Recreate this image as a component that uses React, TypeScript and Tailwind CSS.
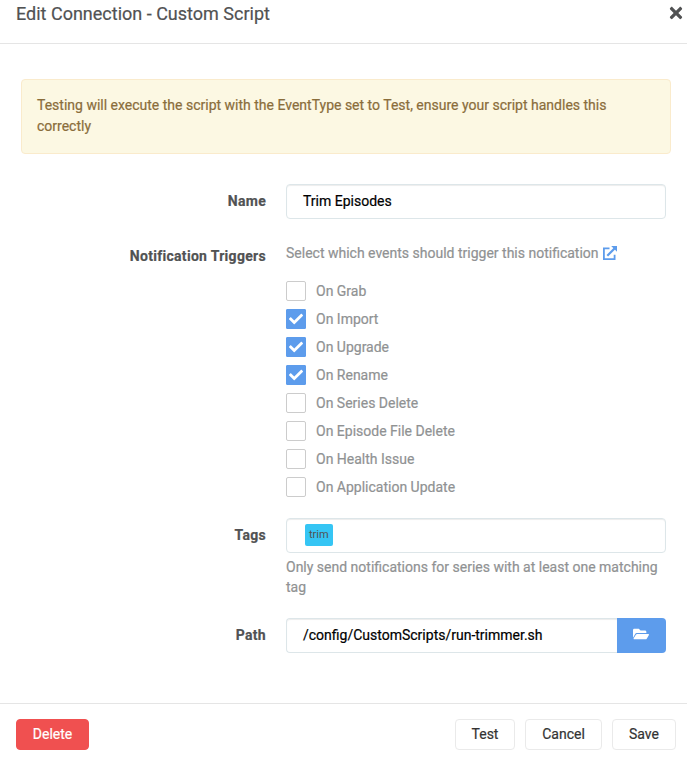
import { FaTimes, FaCheck, FaFolderOpen } from 'react-icons/fa';
import type { ReactNode } from 'react';

const triggers = [
  { label: 'On Grab', on: false },
  { label: 'On Import', on: true },
  { label: 'On Upgrade', on: true },
  { label: 'On Rename', on: true },
  { label: 'On Series Delete', on: false },
  { label: 'On Episode File Delete', on: false },
  { label: 'On Health Issue', on: false },
  { label: 'On Application Update', on: false },
];

const inputBox =
  'h-[35px] border border-[#dde6e9] bg-white px-4 shadow-[inset_0_1px_1px_rgba(0,0,0,0.075)]';

function ExternalLink() {
  return (
    <svg width="14" height="14" viewBox="0 0 14 14" fill="none" stroke="#5d9cec">
      <path d="M6.5 2.4H0.9V13.1H11.6V8.8" strokeWidth="1.8" />
      <path d="M4.3 9.7L11.8 2.2" strokeWidth="2.2" />
      <path d="M8.2 0H14V5.8Z" fill="#5d9cec" stroke="none" />
    </svg>
  );
}

function Row({ label, className, children }: { label: string; className: string; children: ReactNode }) {
  return (
    <div className={`flex ${className}`}>
      <div className="mr-5 w-[245px] shrink-0 text-right font-bold leading-[35px] tracking-[0.3px]">{label}</div>
      <div className="w-[380px]">{children}</div>
    </div>
  );
}

function Button({ children, className }: { children: string; className: string }) {
  return (
    <button className={`h-[31px] rounded border text-center leading-[29px] ${className}`}>{children}</button>
  );
}

export default function App() {
  return (
    <div className="flex h-[760px] w-[687px] flex-col overflow-hidden bg-white font-['Roboto',sans-serif] text-[14px] leading-5 text-[#515253] [-webkit-text-stroke:0.2px]">
      <header className="flex h-11 items-start justify-between border-b border-[#e5e5e5] pl-4 pr-[2px]">
        <h1 className="text-[18px] leading-[28px]">Edit Connection - Custom Script</h1>
        <FaTimes size={18} className="mt-1" />
      </header>
      <main className="flex-1 px-[21px] pt-[35px]">
        <div className="h-[75px] w-[650px] rounded border border-[#faebcc] bg-[#fcf8e3] p-[15px] leading-[21px] text-[#8a6d3b]">
          Testing will execute the script with the EventType set to Test, ensure your script handles this correctly
        </div>
        <Row label="Name" className="mt-[30px] h-[55px]">
          <div className={`rounded leading-[33px] text-black ${inputBox}`}>Trim Episodes</div>
        </Row>
        <Row label="Notification Triggers" className="h-[279px]">
          <div className="flex h-[38px] items-center gap-1 pb-[10px] text-[#909293]">
            Select which events should trigger this notification
            <ExternalLink />
          </div>
          <div className="flex flex-col gap-2 pt-[4px]">
            {triggers.map((t) => (
              <div key={t.label} className="flex h-5 items-center gap-[10px] text-[#909293]">
                <span
                  className={`flex size-5 items-center justify-center border text-white ${
                    t.on ? 'rounded-[1px] border-[#5d9cec] bg-[#5d9cec]' : 'rounded-[2px] border-[#ccc] bg-white'
                  }`}
                >
                  {t.on && <FaCheck size={14} />}
                </span>
                {t.label}
              </div>
            ))}
          </div>
        </Row>
        <Row label="Tags" className="h-[100px]">
          <div className={`flex items-start rounded pl-[18px] pt-[5px] ${inputBox}`}>
            <span className="h-[22px] rounded-[2px] bg-[#35c5f4] px-1 text-[11px] leading-[21px] [-webkit-text-stroke:0px]">
              trim
            </span>
          </div>
          <div className="pt-1 text-[#909293]">
            Only send notifications for series with at least one matching tag
          </div>
        </Row>
        <Row label="Path" className="h-[35px]">
          <div className="flex">
            <div className={`w-[331px] rounded-l border-r-0 leading-[33px] text-black ${inputBox}`}>
              /config/CustomScripts/run-trimmer.sh
            </div>
            <div className="flex h-[35px] w-[49px] items-center justify-center rounded-r bg-[#5d9cec] pb-[3px] pr-px text-white">
              <FaFolderOpen size={16} />
            </div>
          </div>
        </Row>
      </main>
      <footer className="flex h-[57px] items-start gap-[10px] border-t border-[#e5e5e5] px-4 pt-[15px]">
        <Button className="mr-auto w-[73px] border-[#f05050] bg-[#f05050] text-white">Delete</Button>
        <Button className="w-[60px] border-[#eaeaea] text-[#333]">Test</Button>
        <Button className="w-[77px] border-[#eaeaea] text-[#333]">Cancel</Button>
        <Button className="-mr-[5px] w-16 border-[#eaeaea] text-[#333]">Save</Button>
      </footer>
    </div>
  );
}
